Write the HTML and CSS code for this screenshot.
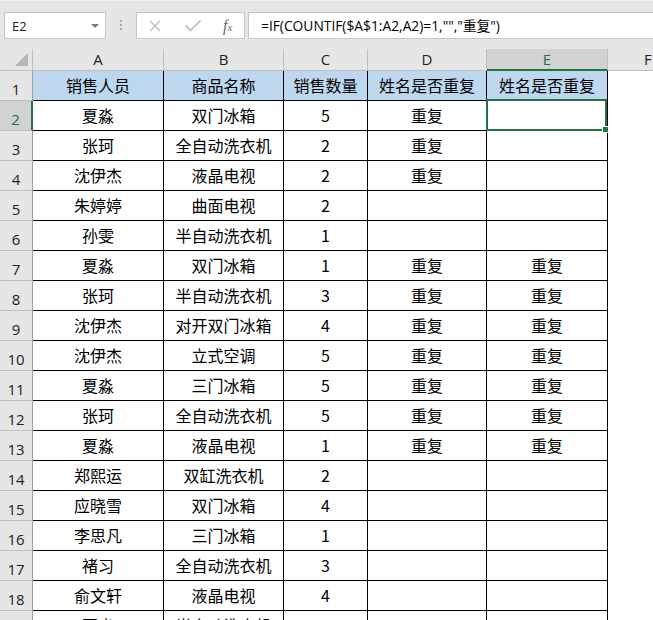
FILE: index.html
```html
<!DOCTYPE html>
<html lang="zh-CN">
<head>
  <meta charset="UTF-8">
  <title>重复姓名检查</title>
  <link rel="stylesheet" href="styles.css">
</head>
<body>
  <div class="toolbar">
    <div class="namebox">
      <span>E2</span>
      <span class="caret"></span>
    </div>
    <div class="grip"><i></i><i></i><i></i></div>
    <div class="fx-buttons">
      <svg width="14" height="12" viewBox="0 0 14 12"><path d="M2 1 L12 11 M12 1 L2 11" stroke="#c3c3c3" stroke-width="1.6" fill="none"/></svg>
      <svg width="18" height="13" viewBox="0 0 18 13"><path d="M1.5 6.5 L6.5 11.5 L16.5 1.5" stroke="#c3c3c3" stroke-width="1.8" fill="none"/></svg>
      <span class="fx">f<small>x</small></span>
    </div>
    <div class="formula">=IF(COUNTIF($A$1:A2,A2)=1,"","重复")</div>
  </div>

  <div class="sheet">
    <div class="corner"><span></span></div>
    <div class="col-head">A</div>
    <div class="col-head">B</div>
    <div class="col-head">C</div>
    <div class="col-head">D</div>
    <div class="col-head active">E</div>
    <div class="col-head last">F</div>

    <div class="row-head">1</div>
    <div class="cell title">销售人员</div><div class="cell title">商品名称</div><div class="cell title">销售数量</div><div class="cell title">姓名是否重复</div><div class="cell title">姓名是否重复</div><div class="blank"></div>

    <div class="row-head active">2</div>
    <div class="cell">夏淼</div><div class="cell">双门冰箱</div><div class="cell">5</div><div class="cell">重复</div><div class="cell selected"></div><div class="blank"></div>

    <div class="row-head">3</div>
    <div class="cell">张珂</div><div class="cell">全自动洗衣机</div><div class="cell">2</div><div class="cell">重复</div><div class="cell"></div><div class="blank"></div>

    <div class="row-head">4</div>
    <div class="cell">沈伊杰</div><div class="cell">液晶电视</div><div class="cell">2</div><div class="cell">重复</div><div class="cell"></div><div class="blank"></div>

    <div class="row-head">5</div>
    <div class="cell">朱婷婷</div><div class="cell">曲面电视</div><div class="cell">2</div><div class="cell"></div><div class="cell"></div><div class="blank"></div>

    <div class="row-head">6</div>
    <div class="cell">孙雯</div><div class="cell">半自动洗衣机</div><div class="cell">1</div><div class="cell"></div><div class="cell"></div><div class="blank"></div>

    <div class="row-head">7</div>
    <div class="cell">夏淼</div><div class="cell">双门冰箱</div><div class="cell">1</div><div class="cell">重复</div><div class="cell">重复</div><div class="blank"></div>

    <div class="row-head">8</div>
    <div class="cell">张珂</div><div class="cell">半自动洗衣机</div><div class="cell">3</div><div class="cell">重复</div><div class="cell">重复</div><div class="blank"></div>

    <div class="row-head">9</div>
    <div class="cell">沈伊杰</div><div class="cell">对开双门冰箱</div><div class="cell">4</div><div class="cell">重复</div><div class="cell">重复</div><div class="blank"></div>

    <div class="row-head">10</div>
    <div class="cell">沈伊杰</div><div class="cell">立式空调</div><div class="cell">5</div><div class="cell">重复</div><div class="cell">重复</div><div class="blank"></div>

    <div class="row-head">11</div>
    <div class="cell">夏淼</div><div class="cell">三门冰箱</div><div class="cell">5</div><div class="cell">重复</div><div class="cell">重复</div><div class="blank"></div>

    <div class="row-head">12</div>
    <div class="cell">张珂</div><div class="cell">全自动洗衣机</div><div class="cell">5</div><div class="cell">重复</div><div class="cell">重复</div><div class="blank"></div>

    <div class="row-head">13</div>
    <div class="cell">夏淼</div><div class="cell">液晶电视</div><div class="cell">1</div><div class="cell">重复</div><div class="cell">重复</div><div class="blank"></div>

    <div class="row-head">14</div>
    <div class="cell">郑熙运</div><div class="cell">双缸洗衣机</div><div class="cell">2</div><div class="cell"></div><div class="cell"></div><div class="blank"></div>

    <div class="row-head">15</div>
    <div class="cell">应晓雪</div><div class="cell">双门冰箱</div><div class="cell">4</div><div class="cell"></div><div class="cell"></div><div class="blank"></div>

    <div class="row-head">16</div>
    <div class="cell">李思凡</div><div class="cell">三门冰箱</div><div class="cell">1</div><div class="cell"></div><div class="cell"></div><div class="blank"></div>

    <div class="row-head">17</div>
    <div class="cell">褚习</div><div class="cell">全自动洗衣机</div><div class="cell">3</div><div class="cell"></div><div class="cell"></div><div class="blank"></div>

    <div class="row-head">18</div>
    <div class="cell">俞文轩</div><div class="cell">液晶电视</div><div class="cell">4</div><div class="cell"></div><div class="cell"></div><div class="blank"></div>

    <div class="row-head">19</div>
    <div class="cell">夏淼</div><div class="cell">半自动洗衣机</div><div class="cell">2</div><div class="cell"></div><div class="cell"></div><div class="blank"></div>
  </div>
</body>
</html>
```

FILE: styles.css
```css
body {
  margin: 0;
  width: 653px;
  height: 620px;
  overflow: hidden;
  background: #fff;
  font-family: "Noto Sans CJK SC", sans-serif;
  color: #000;
}

/* formula bar */
.toolbar {
  display: flex;
  align-items: flex-start;
  height: 49px;
  box-sizing: border-box;
  padding-top: 12px;
  background: #e6e6e6;
  border-top: 1px solid #f2f2f2;
}
.namebox {
  display: flex;
  align-items: center;
  justify-content: space-between;
  width: 102px;
  height: 27px;
  box-sizing: border-box;
  margin-top: -1px;
  margin-left: 4px;
  padding: 0 6px 0 7px;
  background: #fff;
  border: 1px solid #c6c6c6;
  font-family: "Open Sans", sans-serif;
  font-size: 13px;
  color: #222;
}
.caret {
  width: 0;
  height: 0;
  border-left: 4px solid transparent;
  border-right: 4px solid transparent;
  border-top: 4px solid #7b7b7b;
}
.grip {
  display: flex;
  flex-direction: column;
  gap: 2px;
  margin: 7px 0 0 14px;
}
.grip i {
  width: 2px;
  height: 2px;
  background: #a8a8a8;
}
.fx-buttons {
  display: flex;
  align-items: center;
  width: 109px;
  height: 27px;
  box-sizing: border-box;
  margin-top: -1px;
  margin-left: 14px;
  padding-left: 11px;
  background: #fff;
  border: 1px solid #c6c6c6;
}
.fx-buttons svg:nth-child(2) {
  margin-left: 22px;
}
.fx {
  margin-left: 21px;
  font-family: "Liberation Serif", serif;
  font-style: italic;
  font-size: 16px;
  color: #6a6a6a;
}
.fx small {
  font-size: 11px;
}
.formula {
  flex: 1;
  height: 27px;
  box-sizing: border-box;
  margin-top: -1px;
  margin-left: 3px;
  padding-left: 12px;
  background: #fff;
  border: 1px solid #c6c6c6;
  border-right: none;
  font-family: "Open Sans", "Noto Sans CJK SC", sans-serif;
  font-size: 13.8px;
  line-height: 25px;
  white-space: nowrap;
}

/* grid */
.sheet {
  display: grid;
  grid-template-columns: 33px 131px 120px 84px 119px 121px 45px;
  grid-template-rows: 22px repeat(19, 30px);
  width: 653px;
}
.corner,
.col-head,
.row-head {
  box-sizing: border-box;
  background: #e6e6e6;
  border-right: 1px solid #bfbfbf;
  border-bottom: 1px solid #bfbfbf;
  font-family: "Open Sans", sans-serif;
  color: #222;
}
.corner {
  position: relative;
}
.corner span {
  position: absolute;
  right: 4px;
  bottom: 4px;
  width: 0;
  height: 0;
  border-left: 13px solid transparent;
  border-bottom: 13px solid #b5b5b5;
}
.col-head {
  text-align: center;
  font-size: 15px;
  line-height: 21px;
}
.col-head.active {
  background: #d2d2d2;
  color: #217346;
  border-bottom: 2px solid #217346;
}
.col-head.last {
  border-right: none;
  text-align: left;
  padding-left: 36px;
}
.row-head {
  text-align: center;
  font-size: 15px;
  line-height: 22px;
  padding-top: 7px;
  border-right-color: #9e9e9e;
}
.row-head.active {
  background: #d2d2d2;
  color: #217346;
  border-right: 2px solid #217346;
}
.cell {
  box-sizing: border-box;
  border-right: 1px solid #000;
  border-bottom: 1px solid #000;
  text-align: center;
  font-size: 16px;
  line-height: 26px;
  padding-top: 1px;
  white-space: nowrap;
  overflow: hidden;
}
.cell.title {
  background: #bdd7ee;
}
.cell.selected {
  position: relative;
  overflow: visible;
}
.cell.selected::before {
  content: "";
  position: absolute;
  top: -2px;
  left: -1px;
  right: 0;
  bottom: -1px;
  border: 2px solid #217346;
}
.cell.selected::after {
  content: "";
  position: absolute;
  right: -2px;
  bottom: -3px;
  width: 5px;
  height: 5px;
  background: #217346;
  border: 1px solid #fff;
}
```
